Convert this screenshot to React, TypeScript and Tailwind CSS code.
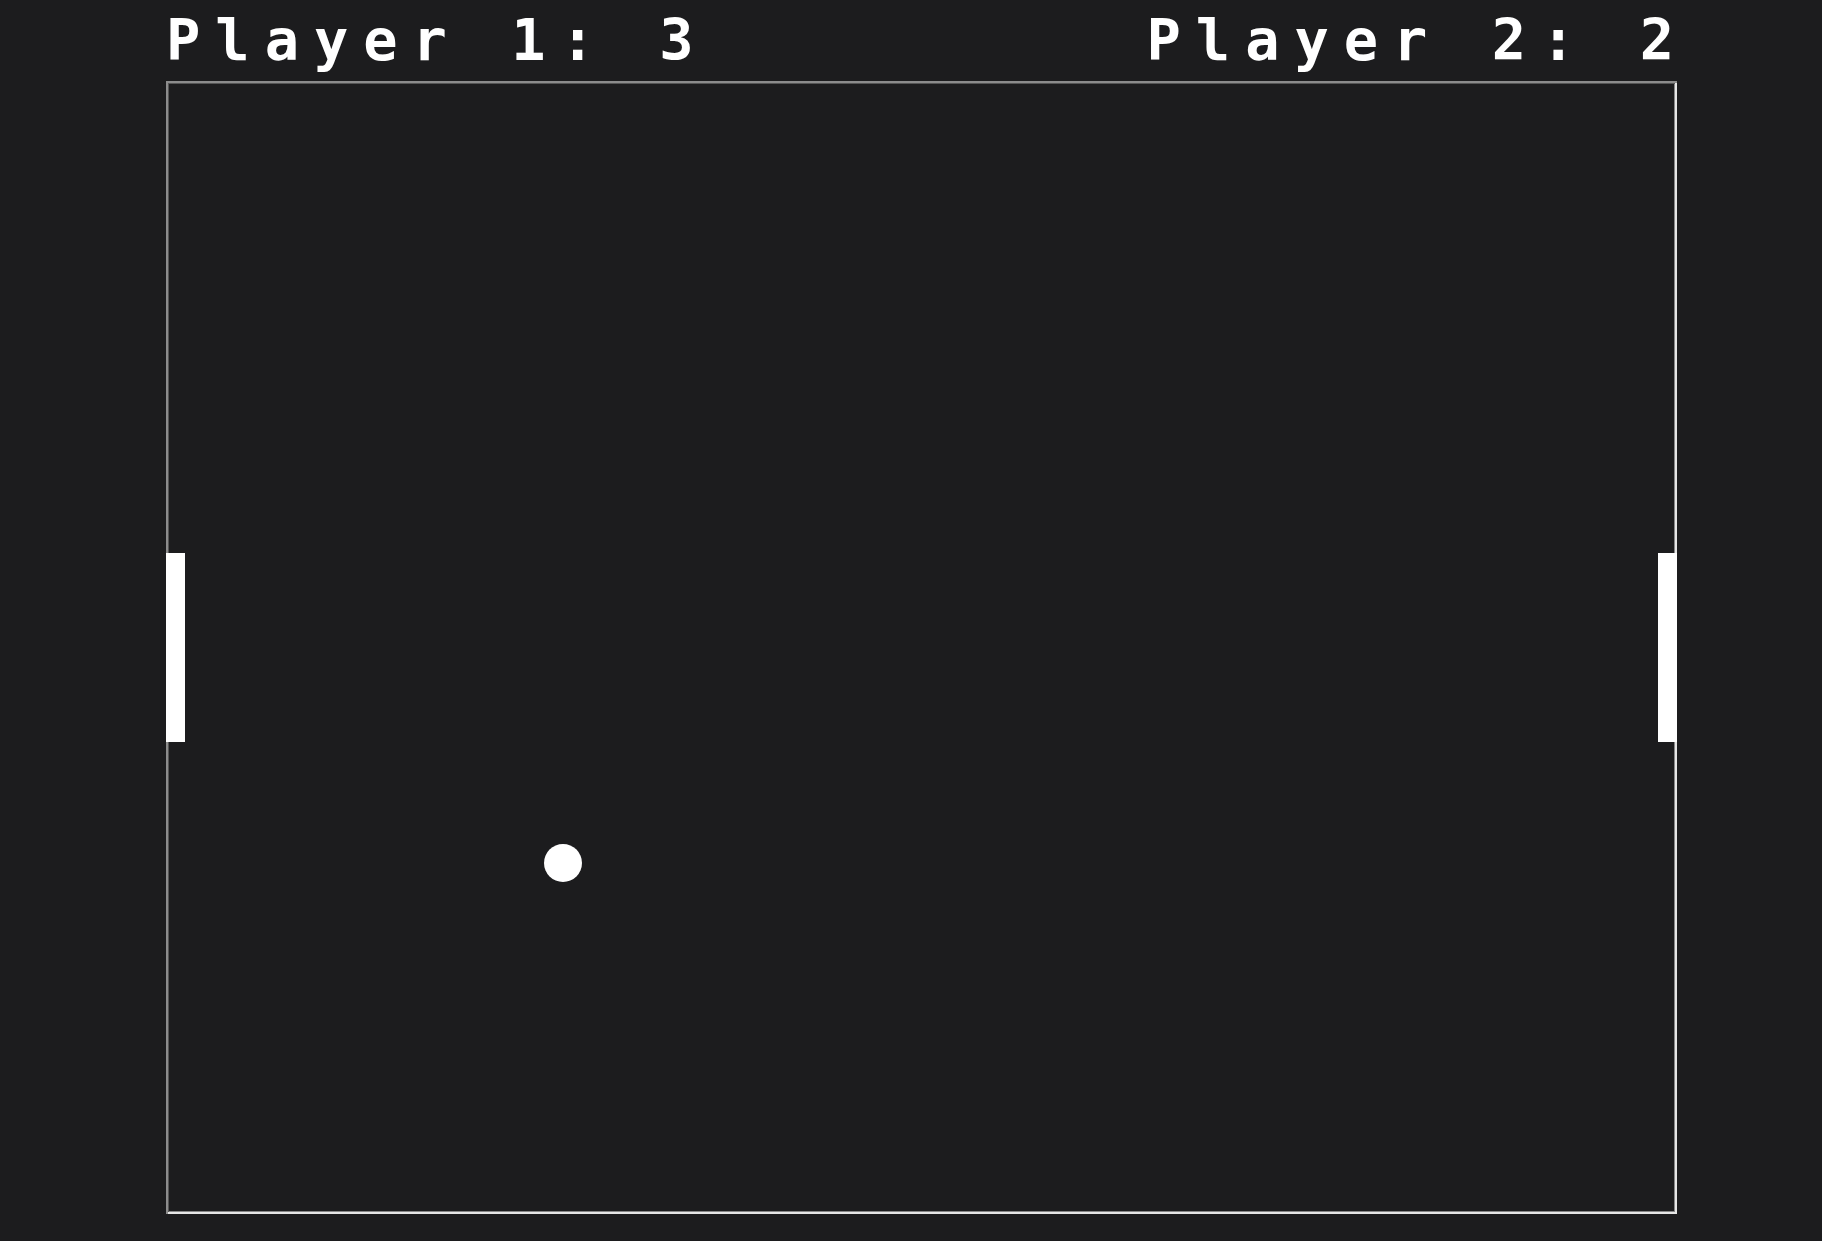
import React from 'react';

const scores = { p1: 3, p2: 2 };

const App: React.FC = () => {
  return (
    <div className="min-h-screen w-full bg-[#1c1c1e] pl-[166px] pt-[12px]">
      <div
        className="flex w-[1523px] justify-between text-[57px] leading-[57px] font-bold text-white tracking-[15px] whitespace-pre"
        style={{ fontFamily: '"DejaVu Sans Mono", "Liberation Mono", monospace' }}
      >
        <span>Player 1: {scores.p1}</span>
        <span>Player 2: {scores.p2}</span>
      </div>
      <div className="relative mt-[12px] h-[1133px] w-[1511px] bg-[#1c1c1e] shadow-[inset_2px_2px_0_#8c8c8c,inset_-2px_-2px_0_#e6e6e6,inset_3px_3px_0_#555,inset_-3px_-3px_0_#888]">
        {/* paddles */}
        <div className="absolute left-0 top-[472px] h-[189px] w-[19px] bg-white" />
        <div className="absolute right-0 top-[472px] h-[189px] w-[19px] bg-white" />
        {/* ball */}
        <div className="absolute left-[378px] top-[763px] h-[38px] w-[38px] rounded-full bg-white" />
      </div>
    </div>
  );
};

export default App;
